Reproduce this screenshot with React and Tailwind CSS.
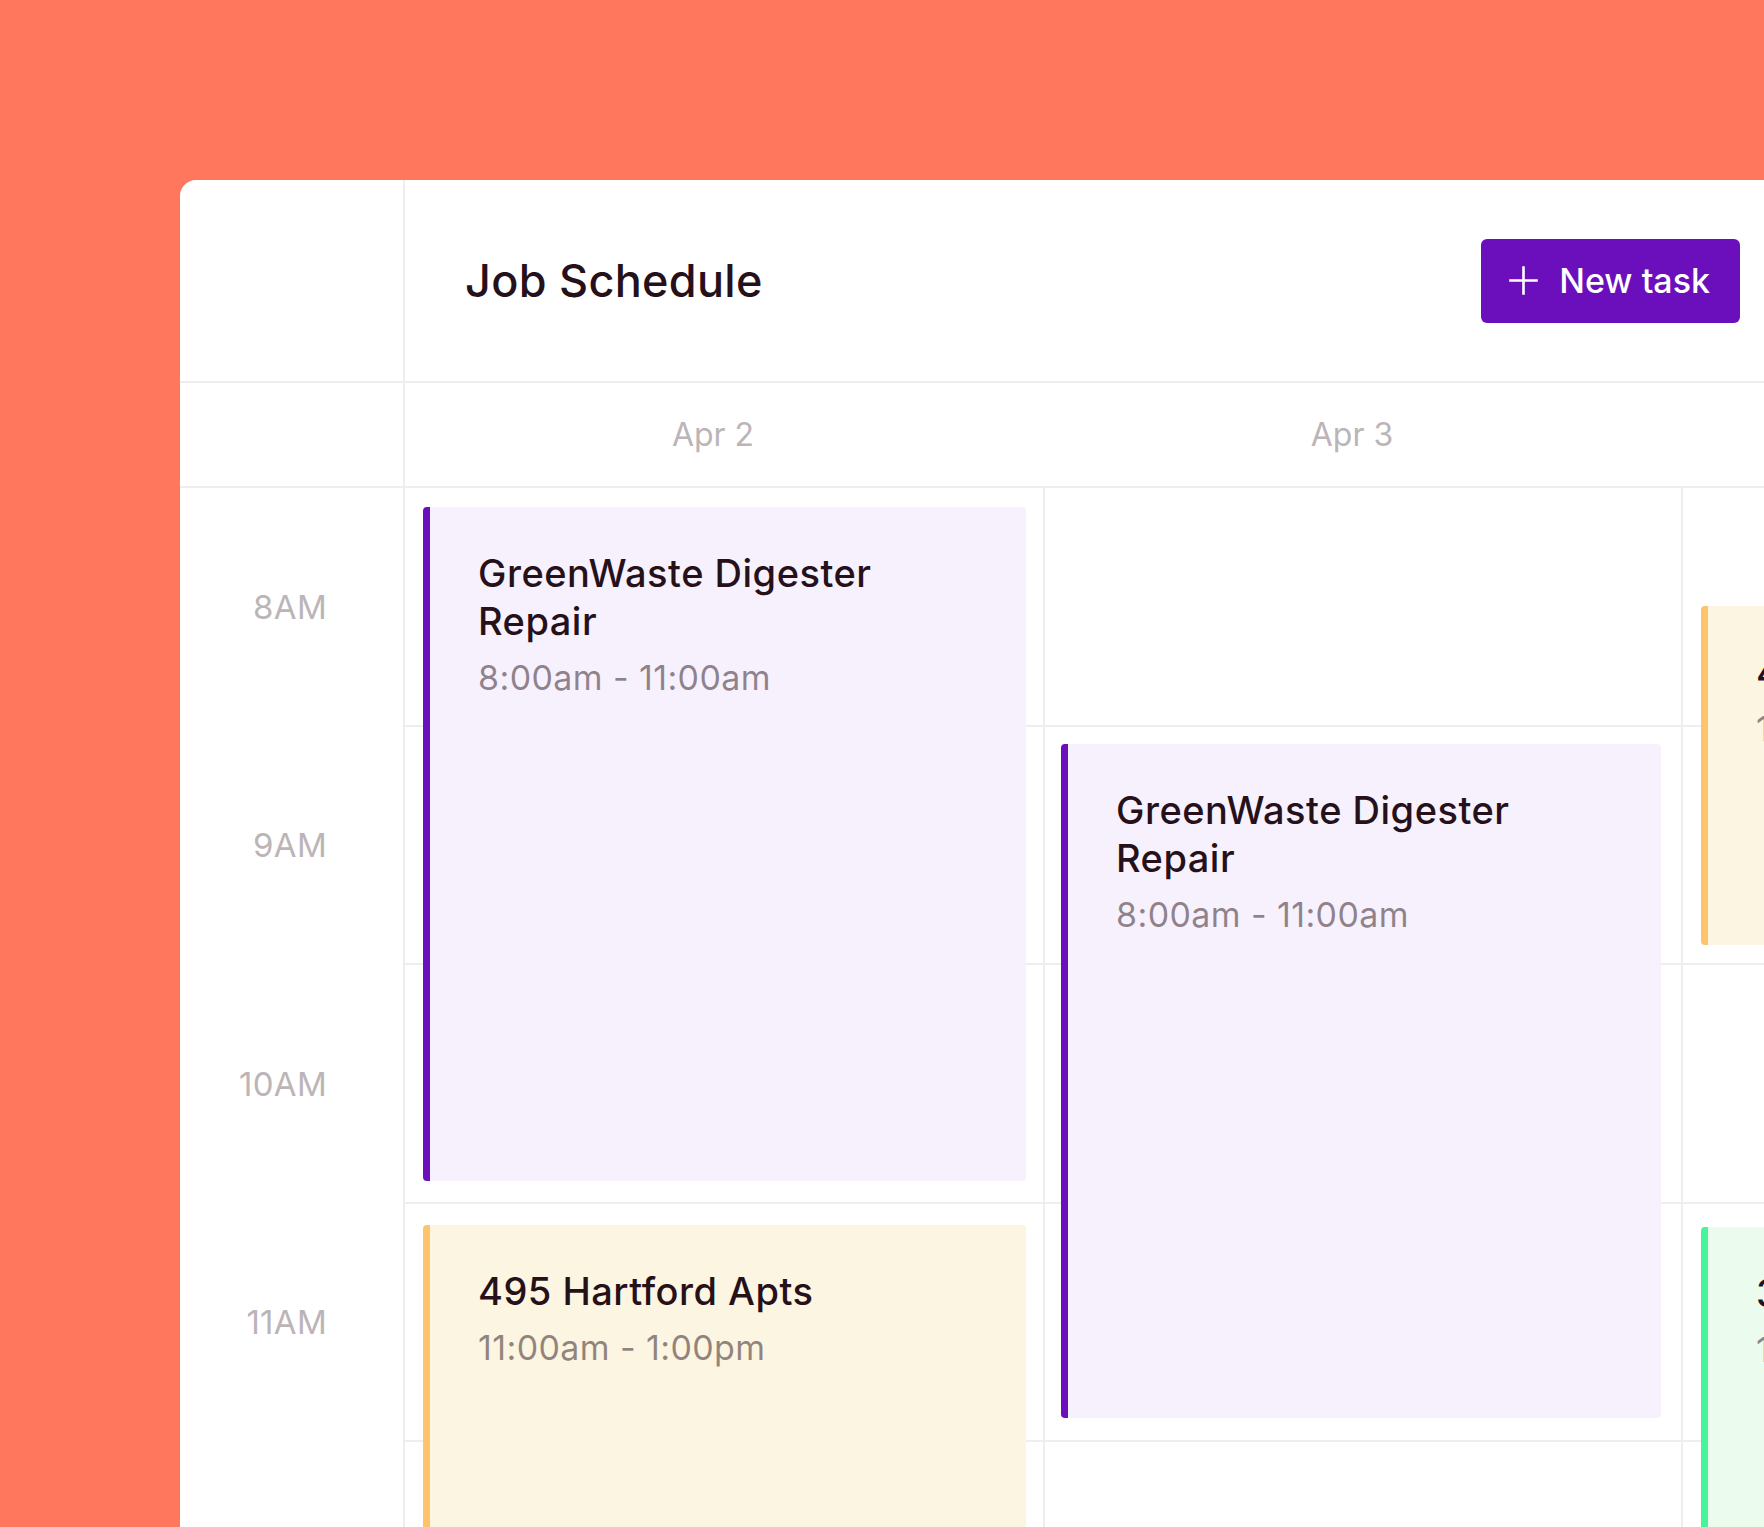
import React from "react";

const HOURS = ["8AM", "9AM", "10AM", "11AM", "12PM"];

function Event({ top, height, left, right, bar, bg, title, time }) {
  return (
    <div
      className={`absolute flex flex-col rounded-[4px] border-l-[7px] pl-[48px] pt-[42px] pr-[20px] overflow-hidden ${bar} ${bg}`}
      style={{ top, height, left, right }}
    >
      <div className="text-[38px] leading-[48px] font-[460] tracking-[0.5px] text-[#26111a] whitespace-pre-line">{title}</div>
      <div className="mt-[13px] text-[34px] leading-[40px] tracking-[0.4px] text-[#2a1218]/50 whitespace-nowrap">{time}</div>
    </div>
  );
}

function DayColumn({ width, children, borderRight = true }) {
  return (
    <div className={`relative shrink-0 flex flex-col ${width} ${borderRight ? "border-r-2 border-[#efedee]" : ""}`}>
      {HOURS.map((h) => (
        <div key={h} className="h-[238.5px] shrink-0 border-b-2 border-[#efedee]" />
      ))}
      {children}
    </div>
  );
}

export default function App() {
  return (
    <div
      className="w-[1764px] h-[1527px] overflow-hidden bg-[#ff775c] pl-[180px] pt-[180px] flex"
      style={{ fontFamily: "Inter, 'Noto Sans', sans-serif" }}
    >
      <div className="flex-1 min-w-0 bg-white rounded-tl-[16px] overflow-hidden flex flex-col">
        {/* Header */}
        <div className="flex h-[203px] shrink-0 border-b-2 border-[#efedee]">
          <div className="w-[225px] shrink-0 border-r-2 border-[#efedee]" />
          <div className="flex-1 flex items-center justify-between pl-[60px] pr-[24px]">
            <h1 className="text-[45px] font-[480] text-[#26111a] tracking-[0.3px]">Job Schedule</h1>
            <button className="flex items-center gap-[21px] h-[84px] pl-[28px] pr-[30px] rounded-[6px] bg-[#6a0fbb] text-white text-[34px] font-[480]">
              <svg width="29" height="29" viewBox="0 0 29 29" fill="none" stroke="white" strokeWidth="2.6" strokeLinecap="square">
                <path d="M14.5 1.5V27.5M1.5 14.5H27.5" />
              </svg>
              <span>New task</span>
            </button>
          </div>
        </div>

        {/* Date row */}
        <div className="flex h-[105px] shrink-0 border-b-2 border-[#efedee] text-[32px] text-[#bcb5b8]">
          <div className="w-[225px] shrink-0 border-r-2 border-[#efedee]" />
          <div className="w-[640px] shrink-0 flex items-center justify-center pr-[24px]">Apr 2</div>
          <div className="w-[638px] shrink-0 flex items-center justify-center pr-[24px]">Apr 3</div>
          <div className="w-[638px] shrink-0 flex items-center justify-center pr-[24px]">Apr 4</div>
        </div>

        {/* Body */}
        <div className="flex flex-1">
          <div className="w-[225px] shrink-0 border-r-2 border-[#efedee] flex flex-col">
            {HOURS.map((h) => (
              <div key={h} className="h-[238.5px] shrink-0 flex items-center justify-end pr-[76px] text-[33px] tracking-[0.3px] text-[#bcb5b8]">
                {h}
              </div>
            ))}
          </div>

          <DayColumn width="w-[640px]">
            <Event
              top={19}
              height={674}
              left={18}
              right={17}
              bar="border-[#6a0fbb]"
              bg="bg-[#f6f1fd]"
              title={"GreenWaste Digester\nRepair"}
              time="8:00am - 11:00am"
            />
            <Event
              top={737}
              height={477}
              left={18}
              right={17}
              bar="border-[#ffc46b]"
              bg="bg-[#fbf5e1]"
              title="495 Hartford Apts"
              time="11:00am - 1:00pm"
            />
          </DayColumn>

          <DayColumn width="w-[638px]">
            <Event
              top={256}
              height={674}
              left={16}
              right={20}
              bar="border-[#6a0fbb]"
              bg="bg-[#f6f1fd]"
              title={"GreenWaste Digester\nRepair"}
              time="8:00am - 11:00am"
            />
          </DayColumn>

          <DayColumn width="w-[638px]" borderRight={false}>
            <Event
              top={118}
              height={339}
              left={18}
              right={20}
              bar="border-[#ffc46b]"
              bg="bg-[#fbf5e1]"
              title="495 Hartford Apts"
              time="10:30am - 12:00pm"
            />
            <Event
              top={739}
              height={477}
              left={18}
              right={20}
              bar="border-[#46f598]"
              bg="bg-[#ebfcef]"
              title="3200 Mission St"
              time="11:00am - 1:00pm"
            />
          </DayColumn>
        </div>
      </div>
    </div>
  );
}
